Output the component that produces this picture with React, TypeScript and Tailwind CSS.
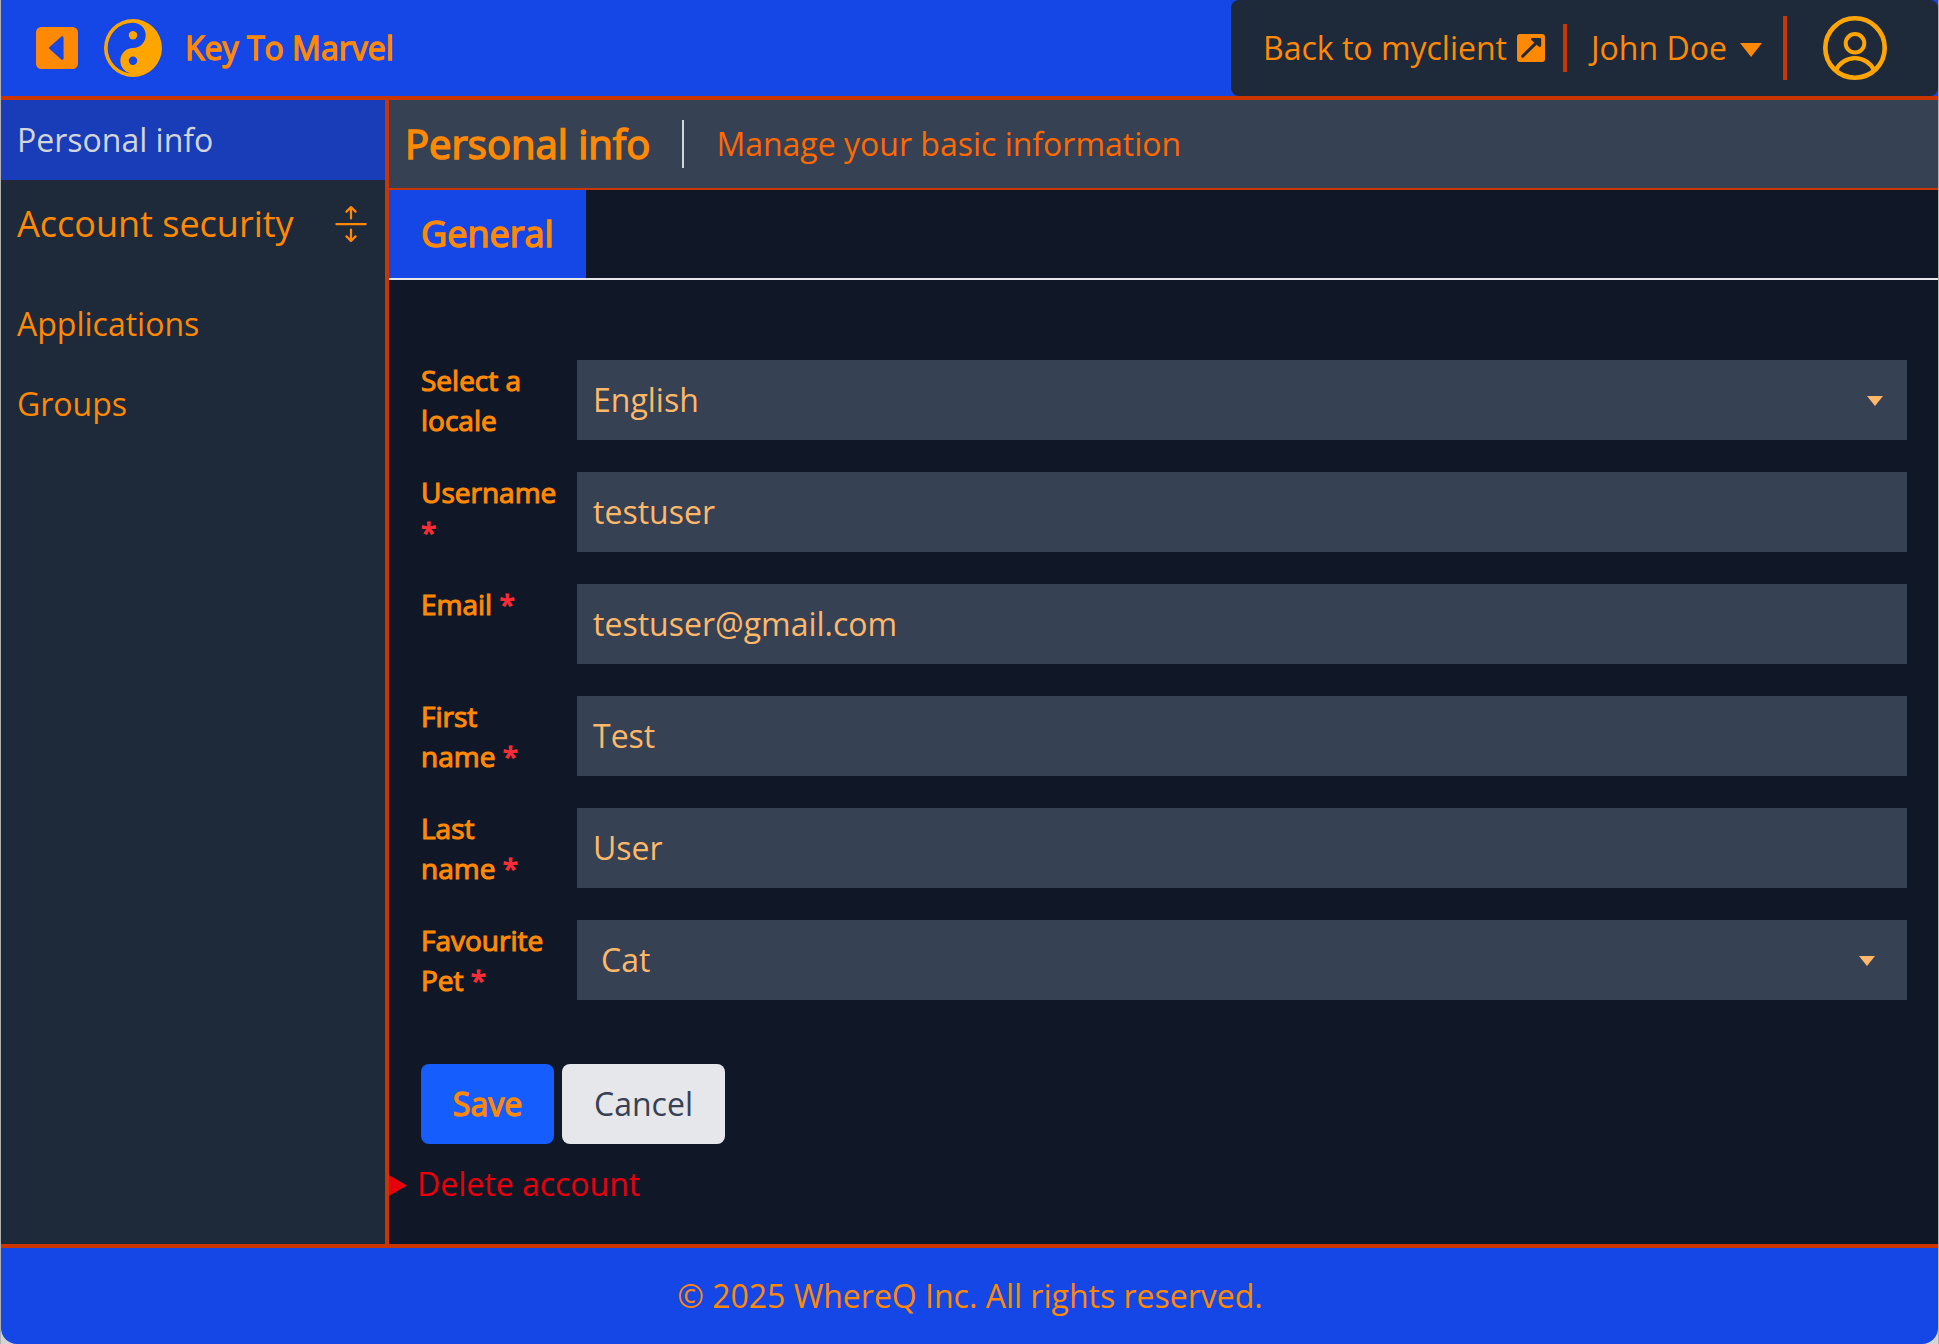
import React from "react";
import { BsCaretLeftSquareFill, BsYinYang, BsArrowsExpand } from "react-icons/bs";

type Field = { label: string[]; required?: boolean; breakStar?: boolean; value: string; select?: boolean; inset?: boolean };

const fields: Field[] = [
  { label: ["Select a", "locale"], value: "English", select: true },
  { label: ["Username"], required: true, breakStar: true, value: "testuser" },
  { label: ["Email"], required: true, value: "testuser@gmail.com" },
  { label: ["First", "name"], required: true, value: "Test" },
  { label: ["Last", "name"], required: true, value: "User" },
  { label: ["Favourite", "Pet"], required: true, value: "Cat", select: true, inset: true },
];

function ExternalIcon() {
  return (
    <svg className="ml-[10px] size-7" viewBox="0 0 28 28">
      <rect width="28" height="28" rx="3" fill="currentColor" />
      <path d="M5.7 22.2L20.5 7.6" stroke="#1e2939" strokeWidth="3" strokeLinecap="round" />
      <path d="M14.6 4H23.2Q24.2 4 24.2 5V12L22.6 13.2L20.2 11.2L16 7.6L13.9 5.6Z" fill="#1e2939" />
    </svg>
  );
}

function Avatar() {
  return (
    <svg className="ml-9 size-16 text-[#ffa500]" viewBox="0 0 64 64" fill="none" stroke="currentColor">
      <circle cx="32" cy="32" r="29.7" strokeWidth="4.6" />
      <circle cx="32" cy="27.3" r="9.3" strokeWidth="4" />
      <path d="M13 54A21.1 21.1 0 0 1 51 54" strokeWidth="4.3" />
    </svg>
  );
}

function Header() {
  return (
    <header className="flex h-[100px] shrink-0 justify-between border-b-4 border-[#ca3500] bg-[#1447e6]">
      <div className="flex items-center pl-[35px]">
        <BsCaretLeftSquareFill className="size-[42px]" />
        <BsYinYang className="ml-[26px] size-[58px] text-[#ffa500]" />
        <h1 className="ml-[23px] text-[32px] leading-[48px] [-webkit-text-stroke:1.3px_currentColor]">Key To Marvel</h1>
      </div>
      <div className="flex h-24 w-[707px] items-center rounded-lg bg-[#1e2939] pl-8">
        <a className="flex items-center">
          <span>Back to myclient</span>
          <ExternalIcon />
        </a>
        <div className="ml-[18px] h-12 w-1 bg-[#ca3500]" />
        <div className="ml-6 flex items-center">
          <span>John Doe</span>
          <svg className="mt-1 ml-[13px] h-[14px] w-[22px]" viewBox="0 0 22 14" fill="currentColor">
            <path d="M0 0h22L11 14z" />
          </svg>
        </div>
        <div className="ml-[21px] h-16 w-1 bg-[#ca3500]" />
        <Avatar />
      </div>
    </header>
  );
}

function Sidebar() {
  return (
    <nav className="flex w-[388px] shrink-0 flex-col border-r-4 border-[#ca3500] bg-[#1e2939]">
      <a className="flex h-20 items-center bg-[#193cb8] px-4 text-[#d1d5dc]">Personal info</a>
      <div className="flex h-[88px] items-center justify-between px-4 text-[36px]">
        <span>Account security</span>
        <BsArrowsExpand className="size-9" />
      </div>
      <a className="mt-4 flex h-20 items-center px-4">Applications</a>
      <a className="flex h-20 items-center px-4">Groups</a>
    </nav>
  );
}

function FieldRow({ field }: { field: Field }) {
  return (
    <div className="flex h-20">
      <label className="w-[156px] shrink-0 text-[28px] leading-10 [-webkit-text-stroke:1.1px_currentColor]">
        {field.label.map((line, i) => (
          <span key={line}>
            {i > 0 && <br />}
            {line}
          </span>
        ))}
        {field.breakStar ? <br /> : " "}
        {field.required && <span className="text-[#fb2c36]">*</span>}
      </label>
      <div
        className={`flex flex-1 items-center justify-between bg-[#364153] text-[#ffb86a] ${field.inset ? "px-6" : "px-4"}`}
      >
        <span>{field.value}</span>
        {field.select && (
          <svg className="mt-[2px] mr-2 h-[10px] w-4" viewBox="0 0 16 10" fill="currentColor">
            <path d="M0 0h16L8 10z" />
          </svg>
        )}
      </div>
    </div>
  );
}

export default function App() {
  return (
    <div className="flex h-[1344px] w-[1939px] flex-col border-x border-[#b0b0b0] bg-[#d4d4d4] font-['Open_Sans',sans-serif] text-[32px] leading-[48px] text-[#ff8904]">
      <Header />
      <div className="flex flex-1">
        <Sidebar />
        <main className="flex flex-1 flex-col bg-[#101828]">
          <div className="flex h-[90px] items-center border-b-2 border-[#ca3500] bg-[#364153] pl-4">
            <h2 className="text-[40px] [-webkit-text-stroke:1.5px_currentColor]">Personal info</h2>
            <div className="ml-8 h-12 w-[2px] bg-[#d1d5dc]" />
            <p className="ml-8 text-[#ff6900]">Manage your basic information</p>
          </div>
          <div className="flex h-[90px] border-b-2 border-gray-200">
            <div className="flex w-[197px] items-center bg-[#1447e6] pl-8 text-[36px] [-webkit-text-stroke:1.4px_currentColor]">
              General
            </div>
          </div>
          <form className="flex flex-col gap-8 pt-20 pr-[31px] pl-8">
            {fields.map((field) => (
              <FieldRow key={field.value} field={field} />
            ))}
            <div className="flex gap-2 pt-8">
              <button
                type="button"
                className="h-20 w-[133px] rounded-lg bg-[#155dfc] [-webkit-text-stroke:1.3px_currentColor]"
              >
                Save
              </button>
              <button type="button" className="h-20 w-[163px] rounded-lg bg-gray-200 text-[#364153]">
                Cancel
              </button>
            </div>
          </form>
          <div className="mt-4 flex items-center text-[#e7000b]">
            <svg className="mt-[3px] h-[21px] w-[18px]" viewBox="0 0 18 21" fill="currentColor">
              <path d="M0 0l18 10.5L0 21z" />
            </svg>
            <span className="ml-[10px]">Delete account</span>
          </div>
        </main>
      </div>
      <footer className="flex h-[100px] shrink-0 items-center justify-center rounded-b-2xl border-t-4 border-[#ca3500] bg-[#1447e6] pl-px">
        © 2025 WhereQ Inc. All rights reserved.
      </footer>
    </div>
  );
}
